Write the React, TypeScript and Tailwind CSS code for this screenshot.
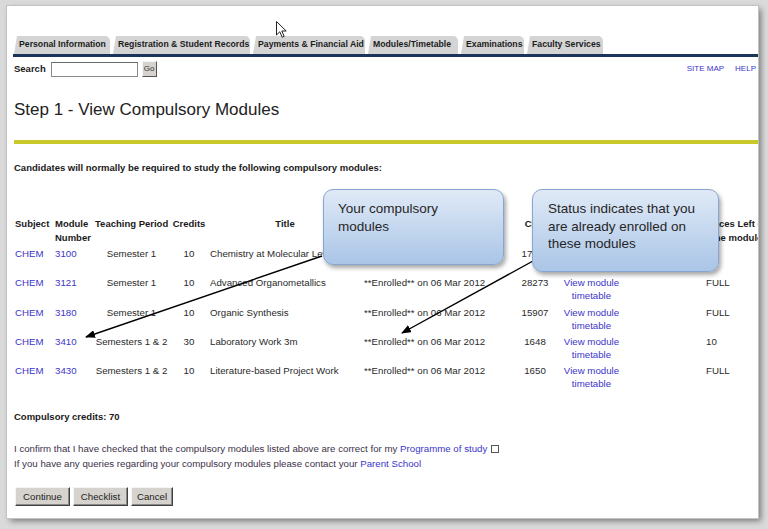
type Row = {
  subj: string;
  num: string;
  period: string;
  credits: string;
  title: string;
  status: string;
  crn: string;
  places: string;
};

const rows: Row[] = [
  { subj: 'CHEM', num: '3100', period: 'Semester 1', credits: '10', title: 'Chemistry at Molecular Level', status: '**Enrolled** on 06 Mar 2012', crn: '17520', places: '6' },
  { subj: 'CHEM', num: '3121', period: 'Semester 1', credits: '10', title: 'Advanced Organometallics', status: '**Enrolled** on 06 Mar 2012', crn: '28273', places: 'FULL' },
  { subj: 'CHEM', num: '3180', period: 'Semester 1', credits: '10', title: 'Organic Synthesis', status: '**Enrolled** on 06 Mar 2012', crn: '15907', places: 'FULL' },
  { subj: 'CHEM', num: '3410', period: 'Semesters 1 & 2', credits: '30', title: 'Laboratory Work 3m', status: '**Enrolled** on 06 Mar 2012', crn: '1648', places: '10' },
  { subj: 'CHEM', num: '3430', period: 'Semesters 1 & 2', credits: '10', title: 'Literature-based Project Work', status: '**Enrolled** on 06 Mar 2012', crn: '1650', places: 'FULL' },
];

const tabs = [
  { label: 'Personal Information', w: 'w-[96px]' },
  { label: 'Registration & Student Records', w: 'w-[137px]' },
  { label: 'Payments & Financial Aid', w: 'w-[112px]' },
  { label: 'Modules/Timetable', w: 'w-[90px]' },
  { label: 'Examinations', w: 'w-[63px]' },
  { label: 'Faculty Services', w: 'w-[76px]' },
];

const cols = 'grid w-max grid-cols-[39px_40px_77px_38px_154px_153px_40px_73px_76px_66px]';

const Btn = ({ label, w }: { label: string; w: string }) => (
  <button
    className={`${w} h-[19px] bg-[#d6d3ce] border border-t-[#f4f4f4] border-l-[#f4f4f4] border-b-[#404040] border-r-[#404040] shadow-[inset_-1px_-1px_0_#8a8a8a] text-[9.7px] text-[#222] leading-none`}
  >
    {label}
  </button>
);

export default function App() {
  return (
    <div className="w-[768px] h-[529px] overflow-hidden bg-[#dadada] pt-[6px] pl-[7px] font-['Liberation_Sans',Arial,sans-serif]">
      <div className="relative w-[751px] h-[512px] bg-white overflow-hidden shadow-[0_0_0_1px_#c2c2c2,3px_3px_6px_rgba(0,0,0,0.45)]">
        <div className="pl-[7px] pt-[30px]">
          {/* tabs */}
          <div className="flex gap-[3px] h-[18px]">
            {tabs.map((t) => (
              <div
                key={t.label}
                className={`${t.w} h-[18px] bg-[#d4d4d4] rounded-tr-[5px] [clip-path:polygon(3px_0,100%_0,100%_100%,0_100%)] pl-[5px] flex items-center whitespace-nowrap text-[8.7px] font-bold text-[#1c1c1c]`}
              >
                {t.label}
              </div>
            ))}
          </div>
          <div className="-ml-px h-[3px] bg-[#1b355a]" />

          {/* search row */}
          <div className="mt-[4px] flex items-center h-[16px]">
            <span className="text-[9.5px] font-bold text-[#1a1a1a]">Search</span>
            <div className="ml-[5px] w-[87px] h-[15px] bg-white border border-[#8a8a8a] border-t-[#6a6a6a]" />
            <div className="ml-[4px] w-[15px] h-[16px] bg-[#d6d3ce] border border-t-[#f4f4f4] border-l-[#f4f4f4] border-b-[#555] border-r-[#555] flex items-center justify-center text-[8px] text-[#333]">
              Go
            </div>
            <div className="ml-auto pr-[2px] flex gap-[11px] text-[8px] text-[#3b35c9]">
              <span>SITE MAP</span>
              <span>HELP</span>
            </div>
          </div>

          {/* heading */}
          <h1 className="mt-[23px] text-[17px] leading-[20px] text-[#222]">Step 1 - View Compulsory Modules</h1>
          <div className="mt-[20px] h-[4px] bg-[#c9c92c]" />

          <p className="mt-[18px] text-[9.5px] leading-[12px] font-bold text-[#1a1a1a]">
            Candidates will normally be required to study the following compulsory modules:
          </p>

          {/* table */}
          <div className="mt-[43px]">
            <div className={`${cols} text-[9.5px] leading-[14px] font-bold text-[#1a1a1a] h-[28px]`}>
              <div className="pl-px">Subject</div>
              <div className="pl-[2px]">Module Number</div>
              <div className="pl-[2px]">Teaching Period</div>
              <div className="text-center">Credits</div>
              <div className="text-center">Title</div>
              <div className="text-center">Status</div>
              <div className="text-center">CRN</div>
              <div />
              <div />
              <div className="text-center">Places Left on the module</div>
            </div>
            {rows.map((r) => (
              <div key={r.num} className={`${cols} h-[29.25px] pt-[2px] text-[9.7px] leading-[13px] text-[#2a2a2a]`}>
                <div className="pl-px text-[#3b35c9]">{r.subj}</div>
                <div className="pl-[2px] text-[#3b35c9]">{r.num}</div>
                <div className="text-center">{r.period}</div>
                <div className="text-center">{r.credits}</div>
                <div className="pl-[2px] whitespace-nowrap">{r.title}</div>
                <div className="pl-[2px] whitespace-nowrap">{r.status}</div>
                <div className="text-center">{r.crn}</div>
                <div className="text-center text-[#3b35c9]">
                  View module
                  <br />
                  timetable
                </div>
                <div />
                <div className="pl-[2px]">{r.places}</div>
              </div>
            ))}
          </div>

          <p className="mt-[20px] text-[9.5px] leading-[12px] font-bold text-[#1a1a1a]">Compulsory credits: 70</p>

          <div className="mt-[18px] text-[9.7px] leading-[15px] text-[#3d3048]">
            <p className="flex items-center whitespace-nowrap">
              I confirm that I have checked that the compulsory modules listed above are correct for my&nbsp;
              <span className="text-[#3b35c9]">Programme of study</span>
              <span className="ml-[4px] inline-block w-[8px] h-[8px] border border-[#555] bg-white" />
            </p>
            <p className="whitespace-nowrap">
              If you have any queries regarding your compulsory modules please contact your{' '}
              <span className="text-[#3b35c9]">Parent School</span>
            </p>
          </div>

          <div className="mt-[16px] flex gap-[3px] pl-px">
            <Btn label="Continue" w="w-[55px]" />
            <Btn label="Checklist" w="w-[55px]" />
            <Btn label="Cancel" w="w-[42px]" />
          </div>
        </div>

        {/* arrows */}
        <svg className="absolute left-0 top-0 pointer-events-none" width="751" height="512">
          <defs>
            <marker id="ah" markerWidth="10" markerHeight="8" refX="9" refY="4" orient="auto" markerUnits="userSpaceOnUse">
              <path d="M0,0 L10,4 L0,8 Z" fill="#000" />
            </marker>
          </defs>
          <line x1="315" y1="250" x2="79" y2="331" stroke="#000" strokeWidth="1.4" markerEnd="url(#ah)" />
          <line x1="526" y1="255" x2="395" y2="327" stroke="#000" strokeWidth="1.4" markerEnd="url(#ah)" />
        </svg>

        {/* callouts */}
        <div className="absolute left-[316px] top-[183px] w-[181px] h-[76px] rounded-[10px] border border-[#86a5d0] bg-gradient-to-b from-[#e0eaf6] to-[#aac5e7] shadow-[2px_3px_4px_rgba(0,0,0,0.35)] pl-[14px] pt-[10px] text-[13.5px] leading-[18px] text-[#262626]">
          Your compulsory
          <br />
          modules
        </div>
        <div className="absolute left-[525px] top-[183px] w-[187px] h-[83px] rounded-[10px] border border-[#86a5d0] bg-gradient-to-b from-[#e0eaf6] to-[#aac5e7] shadow-[2px_3px_4px_rgba(0,0,0,0.35)] pl-[15px] pt-[10px] text-[13.5px] leading-[17.5px] text-[#262626]">
          Status indicates that you
          <br />
          are already enrolled on
          <br />
          these modules
        </div>

        {/* mouse cursor */}
        <svg className="absolute left-[269px] top-[15px]" width="12" height="18" viewBox="0 0 12 18">
          <path d="M0.5,0.5 L0.5,14 L3.8,10.8 L6.2,16.2 L8.2,15.3 L5.8,10 L10.2,10 Z" fill="#fff" stroke="#222" strokeWidth="1" />
        </svg>
      </div>
    </div>
  );
}
